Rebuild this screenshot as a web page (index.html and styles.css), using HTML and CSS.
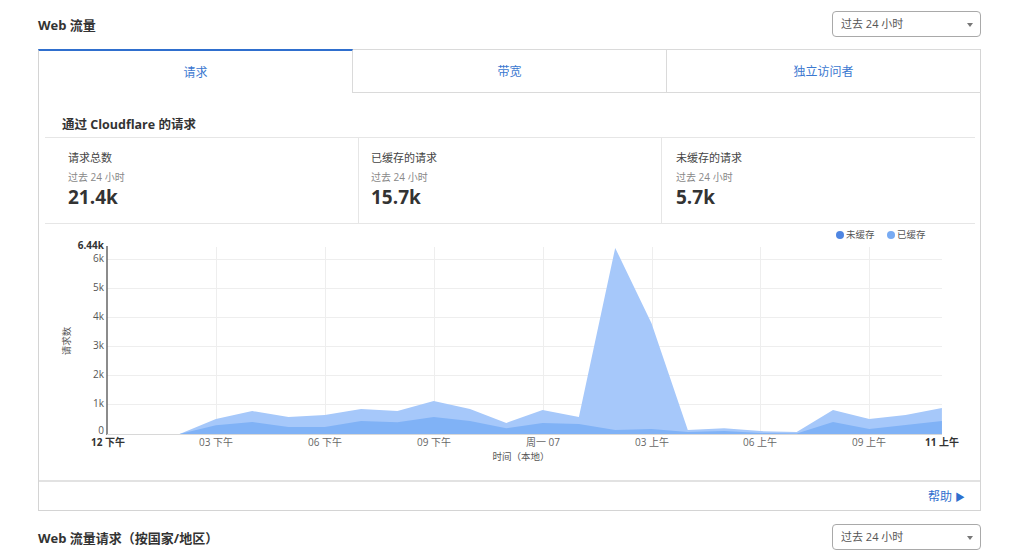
FILE: index.html
```html
<!DOCTYPE html>
<html lang="zh-CN">
<head>
  <meta charset="UTF-8" />
  <meta name="viewport" content="width=device-width, initial-scale=1.0"/>
  <title>Web 流量</title>
  <link rel="stylesheet" href="styles.css">
</head>
<body>

  <div class="page">
    <div class="section-head">
      <h3>Web 流量</h3>
      <div class="select">过去 24 小时 <span class="caret"></span></div>
    </div>

    <div class="card">
      <div class="tabs">
        <div class="tab active">请求</div>
        <div class="tab">带宽</div>
        <div class="tab">独立访问者</div>
      </div>

      <div class="panel">
        <div class="panel-title">通过 Cloudflare 的请求</div>

        <div class="stats">
          <div class="stat">
            <div class="stat-label">请求总数</div>
            <div class="stat-sub">过去 24 小时</div>
            <div class="stat-value">21.4k</div>
          </div>
          <div class="stat">
            <div class="stat-label">已缓存的请求</div>
            <div class="stat-sub">过去 24 小时</div>
            <div class="stat-value">15.7k</div>
          </div>
          <div class="stat">
            <div class="stat-label">未缓存的请求</div>
            <div class="stat-sub">过去 24 小时</div>
            <div class="stat-value">5.7k</div>
          </div>
        </div>

        <svg class="chart" width="930" height="256" viewBox="0 0 930 256">
          <!-- legend -->
          <circle cx="795" cy="11" r="4" fill="#4f86e2"/>
          <text class="legend" x="801" y="11">未缓存</text>
          <circle cx="846" cy="11" r="4" fill="#78abf3"/>
          <text class="legend" x="852" y="11">已缓存</text>

          <!-- grid -->
          <g stroke="#eeeeee" stroke-width="1">
            <line x1="62" y1="35.5" x2="897" y2="35.5"/>
            <line x1="62" y1="64.5" x2="897" y2="64.5"/>
            <line x1="62" y1="93.5" x2="897" y2="93.5"/>
            <line x1="62" y1="122.5" x2="897" y2="122.5"/>
            <line x1="62" y1="151.5" x2="897" y2="151.5"/>
            <line x1="62" y1="180.5" x2="897" y2="180.5"/>
            <line x1="171.5" y1="23" x2="171.5" y2="210"/>
            <line x1="280.5" y1="23" x2="280.5" y2="210"/>
            <line x1="389.5" y1="23" x2="389.5" y2="210"/>
            <line x1="498.5" y1="23" x2="498.5" y2="210"/>
            <line x1="607.5" y1="23" x2="607.5" y2="210"/>
            <line x1="715.5" y1="23" x2="715.5" y2="210"/>
            <line x1="824.5" y1="23" x2="824.5" y2="210"/>
          </g>

          <!-- cached + uncached -->
          <polygon fill="#a6c8fa" points="62,210 98.3,210 134.6,210 170.9,195.1 207.2,187 243.5,193.1 279.8,191 316.1,184.9 352.4,187 388.7,177 425,184.9 461.3,198.9 497.6,186.1 533.9,193.1 570.2,23.9 606.5,99.2 642.8,205.9 679.1,204.2 715.4,207.1 751.7,208 788,186.1 824.3,195.1 860.6,191 896.9,184 896.9,210"/>
          <!-- uncached -->
          <polygon fill="#80b2f6" points="62,210 98.3,210 134.6,210 170.9,201.2 207.2,198 243.5,203 279.8,203 316.1,196.9 352.4,198.3 388.7,193.1 425,196.9 461.3,204.2 497.6,198.9 533.9,200.1 570.2,205.9 606.5,205 642.8,208 679.1,207.1 715.4,209.1 751.7,209.4 788,198 824.3,205 860.6,201 896.9,196.9 896.9,210"/>

          <!-- axes -->
          <line x1="62" y1="22" x2="62" y2="211" stroke="#666" stroke-width="1.5"/>
          <line x1="62" y1="210.5" x2="897" y2="210.5" stroke="#d8d8d8" stroke-width="1"/>

          <g class="ytick">
            <text x="59" y="22" class="strong">6.44k</text>
            <text x="59" y="35">6k</text>
            <text x="59" y="64">5k</text>
            <text x="59" y="93">4k</text>
            <text x="59" y="122">3k</text>
            <text x="59" y="151">2k</text>
            <text x="59" y="180">1k</text>
            <text x="59" y="207">0</text>
          </g>

          <g class="xtick">
            <text x="63" y="219" class="strong">12 下午</text>
            <text x="171" y="219">03 下午</text>
            <text x="280" y="219">06 下午</text>
            <text x="389" y="219">09 下午</text>
            <text x="498" y="219">周一 07</text>
            <text x="607" y="219">03 上午</text>
            <text x="715" y="219">06 上午</text>
            <text x="824" y="219">09 上午</text>
            <text x="897" y="219" class="strong">11 上午</text>
          </g>

          <text class="axis-title" x="476" y="233">时间（本地）</text>
          <text class="axis-title" x="22" y="117" transform="rotate(-90 22 117)">请求数</text>
        </svg>
      </div>

      <div class="card-foot">
        <a href="#" class="help">帮助 <span class="arrow">▶</span></a>
      </div>
    </div>

    <div class="section-head second">
      <h3>Web 流量请求（按国家/地区）</h3>
      <div class="select">过去 24 小时 <span class="caret"></span></div>
    </div>
  </div>

</body>
</html>
```

FILE: styles.css
```css
body {
  margin: 0;
  background: #fff;
  font-family: "Open Sans", "Noto Sans CJK SC", sans-serif;
  color: #333;
}
.page {
  width: 943px;
  margin-left: 38px;
  padding-top: 11px;
}
.section-head {
  display: flex;
  align-items: center;
  justify-content: space-between;
  height: 26px;
}
.section-head.second {
  margin-top: 13px;
}
.section-head h3 {
  margin: 0;
  font-size: 13px;
  font-weight: 700;
  color: #333;
}
.select {
  position: relative;
  box-sizing: border-box;
  width: 149px;
  height: 26px;
  line-height: 24px;
  padding-left: 8px;
  border: 1px solid #a9a9a9;
  border-radius: 4px;
  font-size: 11px;
  color: #555;
}
.caret {
  position: absolute;
  right: 7px;
  top: 11px;
  border-left: 3.5px solid transparent;
  border-right: 3.5px solid transparent;
  border-top: 4px solid #777;
}
.card {
  margin-top: 12px;
  border: 1px solid #d4d4d4;
}
.tabs {
  display: flex;
  margin: -1px -1px 0;
  height: 44px;
}
.tab {
  flex: 1;
  display: flex;
  align-items: center;
  justify-content: center;
  border: 1px solid #dadada;
  border-left: none;
  font-size: 12px;
  color: #3b78d0;
  background: #fff;
}
.tab.active {
  border-left: 1px solid #d4d4d4;
  border-top: 2px solid #2f6fce;
  border-bottom: none;
}
.tab:last-child {
  border-right: 1px solid #d4d4d4;
}
.panel {
  margin: 0 5px 0 6px;
}
.panel-title {
  height: 44px;
  padding-left: 17px;
  line-height: 64px;
  font-size: 12.5px;
  font-weight: 700;
  border-bottom: 1px solid #e6e6e6;
}
.stats {
  display: grid;
  grid-template-columns: 313px 303px 1fr;
  border-bottom: 1px solid #e6e6e6;
}
.stat {
  padding: 12px 0 14px 12px;
  border-left: 1px solid #e6e6e6;
}
.stat:first-child {
  padding-left: 23px;
  border-left: none;
}
.stat:last-child {
  padding-left: 14px;
}
.stat-label {
  font-size: 11px;
  line-height: 16px;
  color: #444;
}
.stat-sub {
  margin-top: 3px;
  font-size: 10px;
  line-height: 16px;
  color: #888;
}
.stat-value {
  font-size: 19px;
  line-height: 24px;
  font-weight: 700;
  color: #333;
}
.chart {
  display: block;
  font-family: "Open Sans", "Noto Sans CJK SC", sans-serif;
}
.chart .legend {
  font-size: 9.5px;
  fill: #555;
  dominant-baseline: middle;
}
.ytick text {
  font-size: 10px;
  fill: #555;
  text-anchor: end;
  dominant-baseline: middle;
}
.xtick text {
  font-size: 10px;
  fill: #666;
  text-anchor: middle;
  dominant-baseline: middle;
}
.chart .strong {
  font-weight: 700;
  fill: #333;
}
.axis-title {
  font-size: 9.5px;
  fill: #555;
  text-anchor: middle;
  dominant-baseline: middle;
}
.card-foot {
  height: 28px;
  border-top: 2px solid #e2e2e2;
  display: flex;
  align-items: center;
  justify-content: flex-end;
  padding-right: 15px;
}
.help {
  font-size: 12px;
  color: #2f6fce;
  text-decoration: none;
}
.help .arrow {
  font-size: 10px;
}
```
